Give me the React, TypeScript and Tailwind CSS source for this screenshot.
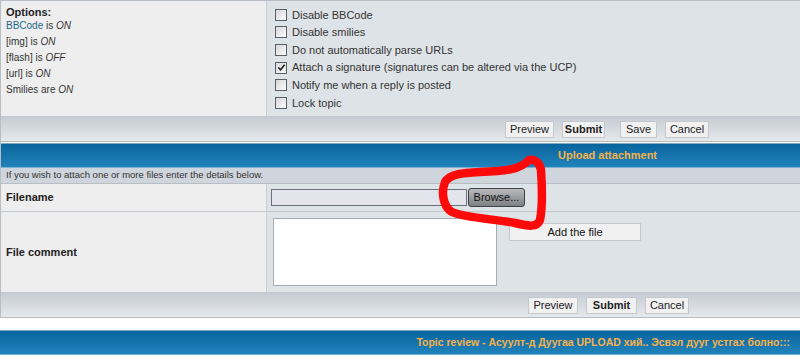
import React from 'react';

const font = { fontFamily: 'Tahoma, "Liberation Sans", Arial, sans-serif' };

function Checkbox({ checked }: { checked?: boolean }) {
  return (
    <span className="relative inline-flex w-[12px] h-[12px] border border-[#5a5f66] bg-gradient-to-br from-[#d6d7db] to-[#fbfbfb] items-center justify-center">
      {checked && (
        <svg viewBox="0 0 10 10" className="w-[9px] h-[9px]">
          <path d="M1.5 5 L4 7.5 L8.5 2" stroke="#1d1d1d" strokeWidth="1.8" fill="none" />
        </svg>
      )}
    </span>
  );
}

function Btn({ label, bold, w, ml }: { label: string; bold?: boolean; w: string; ml?: string }) {
  return (
    <button
      className={`h-[17px] ${w} ${ml ?? ''} border border-[#c4c7cc] bg-[#f1f1f1] text-[11px] leading-none text-[#222] ${bold ? 'font-bold' : ''}`}
    >
      {label}
    </button>
  );
}

function ButtonBar({ children, pl }: { children: React.ReactNode; pl: string }) {
  return (
    <div className="h-[25px] flex items-center bg-gradient-to-b from-[#c6ccd3] to-[#e6e9ec] border-b border-[#b7bcc2]">
      <div className={`flex ${pl}`}>{children}</div>
    </div>
  );
}

function BlueBar({ children, className }: { children?: React.ReactNode; className?: string }) {
  return (
    <div
      className={`h-[25px] flex items-center border-t border-[#7fa6c4] bg-gradient-to-b from-[#08649d] to-[#2183bb] border-b border-b-[#7bb3d6] ${className ?? ''}`}
    >
      {children}
    </div>
  );
}

export default function App() {
  const options = [
    { t: 'Disable BBCode' },
    { t: 'Disable smilies' },
    { t: 'Do not automatically parse URLs' },
    { t: 'Attach a signature (signatures can be altered via the UCP)', c: true },
    { t: 'Notify me when a reply is posted' },
    { t: 'Lock topic' },
  ];

  return (
    <div className="relative w-[800px] h-[355px] overflow-hidden bg-white text-[#333]" style={font}>
      <div className="border-l border-[#b9bec4]">
        {/* options row */}
        <div className="flex h-[117px] border-t border-[#b9bec4] border-b border-b-[#c3c8ce]">
          <div className="w-[266px] bg-[#eeeeee] border-r border-[#c9ced3] pl-[5px] pt-[4px] text-[10px] leading-[16px]">
            <div className="font-bold text-[11px] text-[#222] leading-[14px]">Options:</div>
            <div className="-mt-[1px]"><span className="text-[#1b6a8c]">BBCode</span> is <i>ON</i></div>
            <div>[img] is <i>ON</i></div>
            <div>[flash] is <i>OFF</i></div>
            <div>[url] is <i>ON</i></div>
            <div>Smilies are <i>ON</i></div>
          </div>
          <div className="flex-1 bg-[#dee3e7] pl-[8px] pt-[5px] text-[11px] text-[#333]">
            {options.map((o) => (
              <div key={o.t} className="h-[17.6px] flex items-center gap-[5px]">
                <Checkbox checked={o.c} />
                <span>{o.t}</span>
              </div>
            ))}
          </div>
        </div>

        <ButtonBar pl="pl-[504px]">
          <Btn label="Preview" w="w-[49px]" />
          <Btn label="Submit" bold w="w-[43px]" ml="ml-[8px]" />
          <Btn label="Save" w="w-[37px]" ml="ml-[15px]" />
          <Btn label="Cancel" w="w-[44px]" ml="ml-[8px]" />
        </ButtonBar>

        <BlueBar className="mt-[1px]">
          <span className="pl-[557px] text-[11px] font-bold text-[#f6b24a]">Upload attachment</span>
        </BlueBar>

        <div className="h-[16px] flex items-center bg-[#cfd5dc] border-b border-[#b9bec4] pl-[5px] text-[9.5px] text-[#333]">
          If you wish to attach one or more files enter the details below.
        </div>

        {/* filename */}
        <div className="flex h-[28px] border-b border-[#c3c8ce]">
          <div className="w-[266px] bg-[#eeeeee] border-r border-[#c9ced3] pl-[5px] flex items-center font-bold text-[11px] text-[#222]">
            Filename
          </div>
          <div className="flex-1 bg-[#dee3e7] flex items-center pl-[4px]">
            <div className="w-[196px] h-[17px] bg-[#e4e4ec] border border-[#6b717a]" />
            <button className="ml-[1px] w-[57px] h-[19px] rounded-[3px] border border-[#3f4244] bg-gradient-to-b from-[#b9bbbd] to-[#7e8184] text-[11px] text-[#111]">
              Browse...
            </button>
          </div>
        </div>

        {/* file comment */}
        <div className="flex h-[81px] border-b border-[#c3c8ce]">
          <div className="w-[266px] bg-[#eeeeee] border-r border-[#c9ced3] pl-[5px] flex items-center font-bold text-[11px] text-[#222]">
            File comment
          </div>
          <div className="flex-1 bg-[#dee3e7] flex items-start pl-[6px] pt-[6px]">
            <div className="w-[224px] h-[68px] bg-white border border-[#a5abb2]" />
            <button className="ml-[12px] mt-[5px] w-[132px] h-[18px] border border-[#c4c7cc] bg-[#f1f1f1] text-[11px] text-[#111]">
              Add the file
            </button>
          </div>
        </div>

        <ButtonBar pl="pl-[527px]">
          <Btn label="Preview" w="w-[50px]" />
          <Btn label="Submit" bold w="w-[51px]" ml="ml-[8px]" />
          <Btn label="Cancel" w="w-[44px]" ml="ml-[8px]" />
        </ButtonBar>
      </div>

      <div className="h-[12px] bg-white" />

      <BlueBar className="justify-end pr-[10px]">
        <span className="text-[10.5px] font-bold text-[#f6b24a]" style={{ fontFamily: 'Tahoma, "Liberation Sans", "DejaVu Sans", sans-serif' }}>
          Topic review - Асуулт-д Дуугаа UPLOAD хий.. Эсвэл дууг устгах болно:::
        </span>
      </BlueBar>

      {/* red marker annotation */}
      <svg className="absolute left-0 top-0 pointer-events-none" width="800" height="355">
        <path
          d="M529 160 C520 170 505 171 480 172 C462 173 450 174 445 182 C441 192 443 207 452 212 C465 218 495 219 515 223 C528 226 537 228 540 220 C543 205 542 185 541 170 C540 163 535 159 529 160 Z"
          fill="none"
          stroke="#ff0a0a"
          strokeWidth="8.5"
          strokeLinejoin="round"
          strokeLinecap="round"
        />
      </svg>
    </div>
  );
}
